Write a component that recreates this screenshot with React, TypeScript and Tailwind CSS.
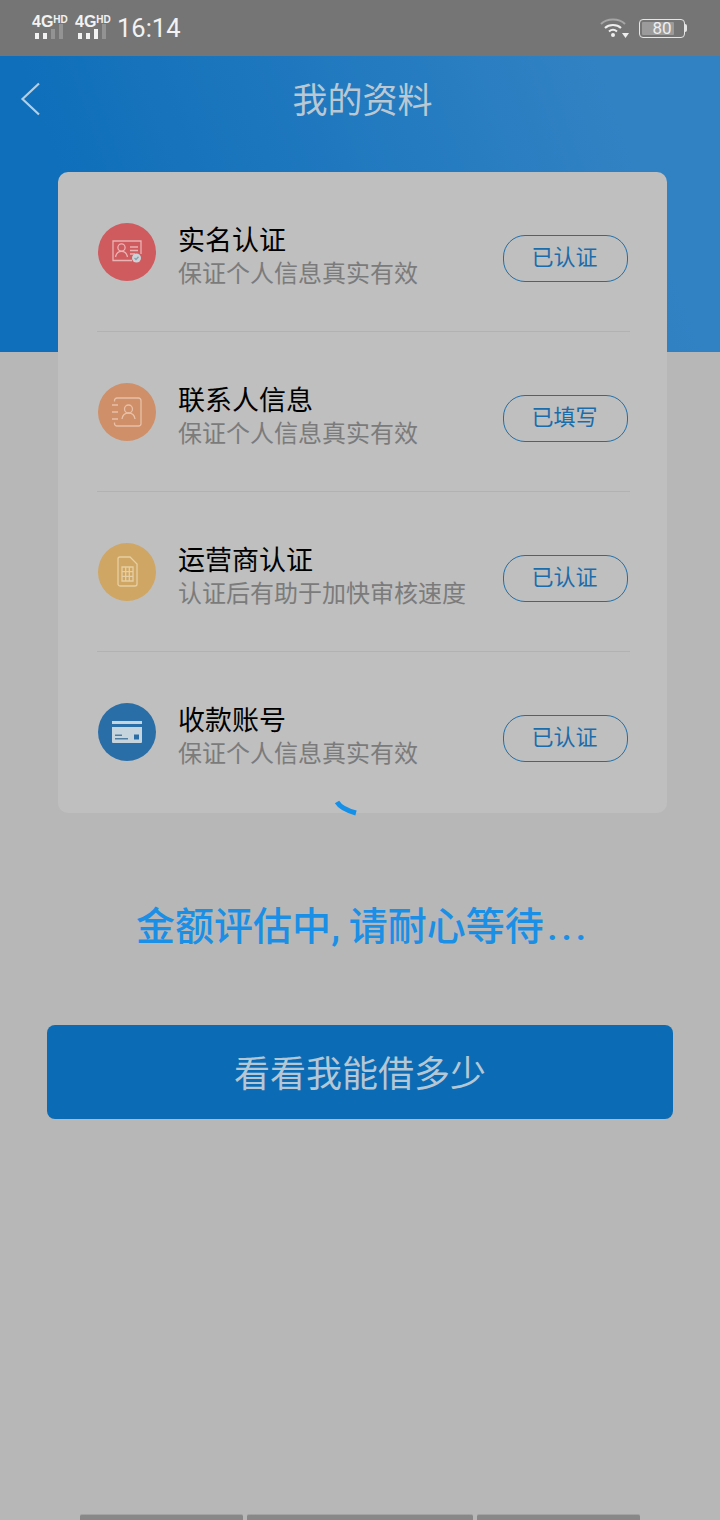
const cjk = "font-['Roboto','Noto_Sans_CJK_SC',sans-serif]";

function Signal({ bars }: { bars: number }) {
  const heights = ["h-[6px]", "h-[6px]", "h-[10px]", "h-[15px]"];
  return (
    <div className="ml-[3px] flex h-[15px] items-end gap-[4.500px]">
      {heights.map((h, i) => (
        <div key={i} className={`w-[3.500px] ${h} ${i < bars ? "bg-[#f2f2f2]" : "bg-[#939393]"}`} />
      ))}
    </div>
  );
}

function NetBlock({ bars }: { bars: number }) {
  return (
    <div className="mb-[2px] flex w-[34px] flex-col">
      <div className="flex h-[9px] items-start font-['Liberation_Sans',sans-serif] font-bold leading-none text-[#f2f2f2]">
        <span className="text-[16px] leading-[14px]">4G</span>
        <span className="text-[10px] leading-[9px]">HD</span>
      </div>
      <Signal bars={bars} />
    </div>
  );
}

function IdIcon() {
  return (
    <svg width="30" height="24" viewBox="0 0 30 24" fill="none" stroke="#e9b3b3" strokeWidth="1.300">
      <path d="M20 20.500H1V1h28v13" />
      <circle cx="9.500" cy="7.500" r="3.600" />
      <path d="M3.500 17c.8-4 3-5.600 6-5.600s5.200 1.600 6 5.600" />
      <path d="M18 7h8M18 10.500h8M18 14h5" />
      <circle cx="24.500" cy="18" r="4.500" fill="#c9d3d8" stroke="none" />
      <path d="M22.500 18l1.500 1.500 2.500-2.800" stroke="#8aa0ad" />
    </svg>
  );
}

function ContactIcon() {
  return (
    <svg width="30" height="30" viewBox="0 0 30 30" fill="none" stroke="#e8c0a8" strokeWidth="1.300">
      <path d="M2.500 4.500V3.500A2.500 2.500 0 0 1 5 1h21.500A2.500 2.500 0 0 1 29 3.500v23a2.500 2.500 0 0 1-2.500 2.500H5a2.500 2.500 0 0 1-2.500-2.500V25.500" />
      <path d="M0 8h6M0 15h6M0 22h6" />
      <circle cx="16.500" cy="12" r="4" />
      <path d="M10 22c.6-4 3.200-6 6.500-6s5.900 2 6.500 6" />
    </svg>
  );
}

function SimIcon() {
  return (
    <svg width="21" height="31" viewBox="0 0 21 31" fill="none" stroke="#e6cfa4" strokeWidth="1.300">
      <path d="M1 3a2 2 0 0 1 2-2h10l7 7v20a2 2 0 0 1-2 2H3a2 2 0 0 1-2-2z" />
      <path d="M5 11h11v14H5zM8.700 11v14M12.300 11v14M5 15.700h11M5 20.300h11" />
    </svg>
  );
}

function CardIcon() {
  return (
    <svg width="30" height="22" viewBox="0 0 30 22" fill="#c6d4de">
      <rect x="0" y="0" width="30" height="3" />
      <path d="M0 6h30v15a1 1 0 0 1-1 1H1a1 1 0 0 1-1-1z" />
      <rect x="3" y="13.500" width="7" height="1.500" fill="#4f7da1" />
      <rect x="3" y="17" width="13" height="1.500" fill="#4f7da1" />
      <rect x="22" y="13.500" width="5" height="5" fill="#2a6ea8" />
    </svg>
  );
}

const rows = [
  { title: "实名认证", sub: "保证个人信息真实有效", btn: "已认证", circle: "bg-[#cf5b5f]", icon: <IdIcon /> },
  { title: "联系人信息", sub: "保证个人信息真实有效", btn: "已填写", circle: "bg-[#cf8f68]", icon: <ContactIcon /> },
  { title: "运营商认证", sub: "认证后有助于加快审核速度", btn: "已认证", circle: "bg-[#cfa663]", icon: <SimIcon /> },
  { title: "收款账号", sub: "保证个人信息真实有效", btn: "已认证", circle: "bg-[#2a6ea8]", icon: <CardIcon /> },
];

export default function App() {
  return (
    <div className={`relative flex h-[1520px] w-[720px] flex-col overflow-hidden bg-[#b7b7b7] ${cjk}`}>
      <div className="flex h-[56px] shrink-0 items-center justify-between bg-[#757575] pl-[32px] pr-[33px]">
        <div className="flex items-center">
          <NetBlock bars={2} />
          <div className="w-[9px]" />
          <NetBlock bars={3} />
          <span className="ml-[8px] mt-[2px] font-['Roboto',sans-serif] text-[25.500px] leading-none text-[#f2f2f2]">16:14</span>
        </div>
        <div className="flex items-center">
          <svg width="30" height="24" viewBox="0 0 30 24" fill="none" className="mr-[9px]">
            <path d="M1 8c6-6 18-6 24 0" stroke="#a5a5a5" strokeWidth="2" />
            <path d="M5 12c4-4 12-4 16 0" stroke="#eeeeee" strokeWidth="2" />
            <path d="M9 15.500c2.500-2.200 5.500-2.200 8 0" stroke="#eeeeee" strokeWidth="2" />
            <circle cx="13" cy="19" r="2" fill="#eeeeee" />
            <path d="M22 17h7l-3.500 5z" fill="#eeeeee" />
          </svg>
          <div className="relative flex h-[19px] w-[46px] items-center justify-center rounded-[4px] border-[1.500px] border-[#e5e5e5]">
            <div className="absolute bottom-[2px] left-[2px] top-[2px] w-[32px] rounded-[1px] bg-[#9b9b9b]" />
            <span className="relative font-['Roboto',sans-serif] text-[17px] leading-none text-[#eeeeee]">80</span>
          </div>
          <div className="h-[8px] w-[2px] rounded-r-sm bg-[#e5e5e5]" />
        </div>
      </div>

      <div className="h-[296px] shrink-0 bg-[linear-gradient(70deg,#0f6fba_15%,#3182c3_85%)]">
        <div className="relative flex h-[90px] items-center justify-center pl-[5px]">
          <svg width="22" height="34" viewBox="0 0 22 34" fill="none" className="absolute left-[20px] top-[26px]">
            <path d="M19 1.500 2.500 17 19 32.500" stroke="#b4cfe2" strokeWidth="2.200" />
          </svg>
          <span className="text-[35px] leading-none text-[#b9c8d2]">我的资料</span>
        </div>
      </div>

      <div className="mx-[58px] mt-[-180px] w-[609px] shrink-0 rounded-[10px] bg-[#bfbfbf] pb-[1px] pl-[39px] pr-[37px]">
        {rows.map((r, i) => (
          <div key={r.title} className={`flex h-[160px] items-center border-b ${i < 3 ? "border-[#b2b2b2]" : "border-transparent"}`}>
            <div className={`ml-[1px] flex h-[58px] w-[58px] shrink-0 items-center justify-center rounded-full ${r.circle}`}>
              {r.icon}
            </div>
            <div className="ml-[22px] mt-[13px] flex flex-1 flex-col">
              <span className="text-[27px] leading-[33px] text-black">{r.title}</span>
              <span className="text-[24px] leading-[33px] text-[#7b7b7b]">{r.sub}</span>
            </div>
            <div className="mr-[2px] mt-[14px] flex h-[47px] w-[125px] items-center justify-center rounded-[22px] border border-[#226fa8] pb-[2px] pr-[2px] text-[22px] text-[#1a6cab]">
              {r.btn}
            </div>
          </div>
        ))}
      </div>

      <svg width="30" height="24" viewBox="0 0 30 24" fill="none" className="absolute left-[332px] top-[798px]">
        <path d="M5 4c3 5 8 8 19 11" stroke="#1590e8" strokeWidth="5" />
      </svg>

      <div className="mt-[88px] pl-[6px] text-center text-[39px] font-medium leading-[52px] text-[#1b8fe6]">
        金额评估中<span className="tracking-[9px]">,</span>请耐心等待<span className="ml-[3px] tracking-[3.500px]">...</span>
      </div>

      <div className="mx-[47px] mt-[72px] flex h-[94px] w-[626px] shrink-0 items-center justify-center rounded-[8px] bg-[#0b6cb5] pt-[6px] text-[36px] text-[#b5c7d4]">
        看看我能借多少
      </div>

      <div className="absolute bottom-0 left-[80px] flex h-[6px] gap-[4px]">
        <div className="w-[163px] rounded-t-[2px] border-t border-[#a3a3a3] bg-[#888888]" />
        <div className="w-[226px] rounded-t-[2px] border-t border-[#a3a3a3] bg-[#888888]" />
        <div className="w-[163px] rounded-t-[2px] border-t border-[#a3a3a3] bg-[#888888]" />
      </div>
    </div>
  );
}
